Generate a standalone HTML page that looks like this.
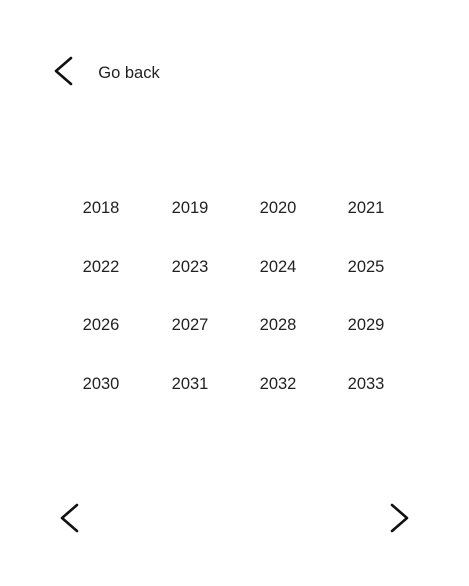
<!DOCTYPE html><html><head><style>
body{margin:0;width:469px;height:586px;background:#fff;font-family:"Liberation Sans",sans-serif;color:#222;position:relative;overflow:hidden}
.t{position:absolute;font-size:16.5px;line-height:20px;transform:translate(-50%,-50%);white-space:nowrap;margin-top:1px}
svg{position:absolute}
</style></head><body>
<svg style="left:50px;top:55px" width="28" height="32"><path d="M21 3 L6 16 L21 29" fill="none" stroke="#111" stroke-width="2.6" stroke-linecap="round" stroke-linejoin="round"/></svg>
<div class="t" style="left:129px;top:72px">Go back</div>
<div class="t" style="left:101px;top:207px">2018</div><div class="t" style="left:190px;top:207px">2019</div><div class="t" style="left:278px;top:207px">2020</div><div class="t" style="left:366px;top:207px">2021</div>
<div class="t" style="left:101px;top:266px">2022</div><div class="t" style="left:190px;top:266px">2023</div><div class="t" style="left:278px;top:266px">2024</div><div class="t" style="left:366px;top:266px">2025</div>
<div class="t" style="left:101px;top:324px">2026</div><div class="t" style="left:190px;top:324px">2027</div><div class="t" style="left:278px;top:324px">2028</div><div class="t" style="left:366px;top:324px">2029</div>
<div class="t" style="left:101px;top:383px">2030</div><div class="t" style="left:190px;top:383px">2031</div><div class="t" style="left:278px;top:383px">2032</div><div class="t" style="left:366px;top:383px">2033</div>
<svg style="left:56px;top:502px" width="28" height="32"><path d="M21 3 L6 16 L21 29" fill="none" stroke="#111" stroke-width="2.6" stroke-linecap="round" stroke-linejoin="round"/></svg>
<svg style="left:386px;top:502px" width="28" height="32"><path d="M6 3 L21 16 L6 29" fill="none" stroke="#111" stroke-width="2.6" stroke-linecap="round" stroke-linejoin="round"/></svg>
</body></html>
